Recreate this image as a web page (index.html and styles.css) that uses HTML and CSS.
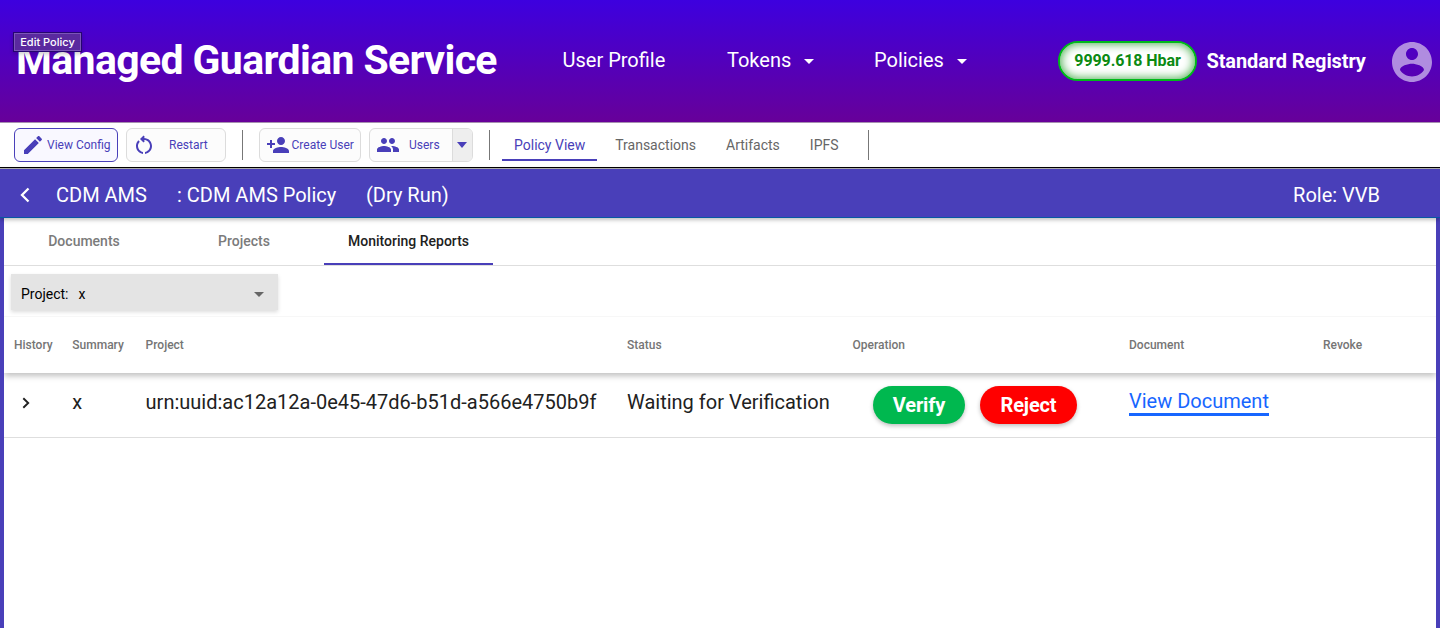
FILE: index.html
```html
<!DOCTYPE html>
<html lang="en">
<head>
<meta charset="utf-8">
<title>Managed Guardian Service</title>
<link rel="stylesheet" href="styles.css">
</head>
<body>
<header class="header">
  <div class="brand">Managed Guardian Service<span class="tooltip">Edit Policy</span></div>
  <nav class="menu">
    <a class="menu-profile">User Profile</a>
    <a class="menu-tokens">Tokens <i class="caret"></i></a>
    <a class="menu-policies">Policies <i class="caret"></i></a>
  </nav>
  <div class="balance">9999.618 Hbar</div>
  <div class="role-name">Standard Registry</div>
  <svg class="avatar" viewBox="2 2 20 20"><path d="M12 2C6.48 2 2 6.48 2 12s4.48 10 10 10 10-4.480 10-10S17.520 2 12 2zm0 3c1.660 0 3 1.340 3 3s-1.340 3-3 3-3-1.340-3-3 1.340-3 3-3zm0 14.200c-2.500 0-4.710-1.280-6-3.220.030-1.990 4-3.080 6-3.080 1.990 0 5.970 1.090 6 3.080-1.290 1.940-3.500 3.220-6 3.220z"/></svg>
</header>

<section class="toolbar">
  <button class="tool tool-config active"><svg viewBox="0 0 24 24"><path d="M3 17.250V21h3.750L17.810 9.940l-3.750-3.750L3 17.250zM20.710 7.040c.390-.390.390-1.020 0-1.410l-2.340-2.340c-.390-.390-1.020-.390-1.410 0l-1.830 1.830 3.750 3.750 1.830-1.830z"/></svg><span>View Config</span></button>
  <button class="tool tool-restart"><svg viewBox="0 0 24 24"><path d="M6 13c0-1.650.670-3.150 1.760-4.240L6.340 7.340C4.900 8.790 4 10.790 4 13c0 4.080 3.050 7.440 7 7.930v-2.020c-2.830-.480-5-2.940-5-5.910zm14 0c0-4.420-3.580-8-8-8-.060 0-.120.010-.180.010l1.090-1.090L11.500 2.500 8 6l3.500 3.500 1.410-1.410-1.080-1.080c.060 0 .120-.010.170-.010 3.310 0 6 2.690 6 6 0 2.970-2.170 5.430-5 5.910v2.020c3.950-.490 7-3.850 7-7.930z"/></svg><span>Restart</span></button>
  <i class="divider"></i>
  <button class="tool tool-create"><svg viewBox="0 0 24 24"><path d="M15 12c2.210 0 4-1.790 4-4s-1.790-4-4-4-4 1.790-4 4 1.790 4 4 4zm-9-2V7H4v3H1v2h3v3h2v-3h3v-2H6zm9 4c-2.670 0-8 1.340-8 4v2h16v-2c0-2.660-5.330-4-8-4z"/></svg><span>Create User</span></button>
  <div class="tool tool-users"><svg viewBox="0 0 24 24"><path d="M16 11c1.660 0 2.990-1.340 2.990-3S17.660 5 16 5c-1.660 0-3 1.340-3 3s1.340 3 3 3zm-8 0c1.660 0 2.990-1.340 2.990-3S9.660 5 8 5C6.340 5 5 6.340 5 8s1.340 3 3 3zm0 2c-2.330 0-7 1.170-7 3.500V19h14v-2.500c0-2.330-4.670-3.500-7-3.500zm8 0c-.290 0-.620.020-.970.050 1.160.840 1.970 1.970 1.970 3.450V19h6v-2.500c0-2.330-4.670-3.500-7-3.500z"/></svg><span>Users</span><b class="split"><i class="caret"></i></b></div>
  <i class="divider"></i>
  <nav class="views">
    <a class="active">Policy View</a><a>Transactions</a><a>Artifacts</a><a>IPFS</a>
  </nav>
  <i class="divider"></i>
</section>

<section class="policy-bar">
  <svg class="back" viewBox="0 0 10 16"><path d="M8.500 1.500 2 8l6.500 6.500"/></svg>
  <span class="policy-name">CDM AMS</span>
  <span class="policy-desc">: CDM AMS Policy</span>
  <span class="policy-mode">(Dry Run)</span>
  <span class="policy-role">Role: VVB</span>
</section>

<main class="content">
  <nav class="tabs">
    <a class="tab-documents">Documents</a><a class="tab-projects">Projects</a><a class="tab-reports active">Monitoring Reports</a>
  </nav>
  <div class="filters">
    <div class="filter"><span>Project:</span><span class="filter-value">x</span><i class="caret"></i></div>
  </div>
  <div class="row head">
    <span>History</span><span>Summary</span><span>Project</span><span>Status</span><span>Operation</span><span>Document</span><span>Revoke</span>
  </div>
  <div class="row data">
    <svg class="expand" viewBox="0 0 8 12"><path d="m1.300 1.200 4.900 4.800-4.900 4.800"/></svg>
    <span>x</span>
    <span class="uuid">urn:uuid:ac12a12a-0e45-47d6-b51d-a566e4750b9f</span>
    <span class="status">Waiting for Verification</span>
    <div class="actions"><button class="pill verify">Verify</button><button class="pill reject">Reject</button></div>
    <div><a class="doc-link">View Document</a></div>
    <span></span>
  </div>
</main>
</body>
</html>
```
FILE: styles.css
```css
* { box-sizing: border-box; }
body {
  margin: 0;
  height: 628px;
  overflow: hidden;
  display: flex;
  flex-direction: column;
  background: #fff;
  font-family: Roboto, "Liberation Sans", sans-serif;
  color: #212121;
  white-space: nowrap;
}
button { font-family: inherit; padding: 0; }
svg { flex: none; display: block; }
.caret {
  display: inline-block;
  flex: none;
  border: 5px solid transparent;
  border-top-color: currentColor;
  border-bottom: 0;
}

.header {
  height: 123px;
  flex: none;
  display: flex;
  align-items: center;
  color: #fff;
  background: linear-gradient(#3d00df, #670099);
  border-bottom: 1px solid #a58fb0;
}
.brand {
  position: relative;
  width: 546px;
  padding-left: 16px;
  margin-top: -2px;
  font-size: 41px;
  font-weight: 700;
  letter-spacing: -0.63px;
}
.tooltip {
  position: absolute;
  left: 13px;
  top: -4px;
  width: 69px;
  height: 20px;
  border: 1px solid #26066f;
  box-shadow: inset 0 0 0 1px #7b55b8, 0 2px 4px rgba(0, 0, 0, .2);
  background: #5a299f;
  font-family: Inter, Roboto, sans-serif;
  font-size: 11px;
  font-weight: 500;
  line-height: 18px;
  letter-spacing: 0;
  text-align: center;
}
.menu { display: flex; font-size: 20px; width: 512px; padding-left: 16.500px; margin-top: -2px; }
.menu a { display: flex; align-items: center; gap: 13px; }
.menu .caret { margin-top: 3px; }
.menu-profile { width: 164.500px; }
.menu-tokens { width: 147px; }
.balance {
  width: 139px;
  height: 40px;
  border: 2px solid #00b91a;
  border-radius: 20px;
  background: #fff;
  box-shadow: inset 0 0 10px 1px #4caf50;
  color: #0b8a12;
  font-size: 16px;
  font-weight: 700;
  letter-spacing: -.1px;
  line-height: 36px;
  text-align: center;
}
.role-name { width: 195px; padding-left: 9.500px; font-size: 20px; font-weight: 700; letter-spacing: -.12px; }
.avatar { width: 40px; height: 40px; fill: #b08ce0; margin-top: 2px; }

.toolbar {
  height: 45px;
  flex: none;
  display: flex;
  align-items: center;
  padding: 0 0 0 14px;
  border-bottom: 1px solid #000;
}
.tool {
  display: flex;
  align-items: center;
  height: 34px;
  border: 1px solid #dcdcdc;
  border-radius: 6px;
  background: #fcfcfc;
  color: #493fb9;
  font-size: 12px;
  overflow: hidden;
}
.tool svg { width: 24px; height: 24px; fill: currentColor; }
.tool.active { border-color: #493fb9; background: #f9f8ff; }
.tool-config { width: 104px; margin-right: 8px; padding-left: 6px; gap: 2px; }
.tool-restart { width: 100px; padding-left: 5px; gap: 13px; }
.tool-create { width: 102px; margin-right: 8px; padding-left: 5.500px; gap: 2px; }
.tool-users { width: 104px; padding-left: 6px; gap: 9px; }
.split {
  width: 20px;
  height: 32px;
  margin-left: auto;
  display: flex;
  align-items: center;
  justify-content: center;
  border-left: 1px solid #dcdcdc;
  background: #eee;
}
.split .caret { border-width: 6px 5.500px 0; margin-right: 1px; }
.divider { width: 1px; height: 30px; margin: 0 16px; background: #777; }
.views { display: flex; height: 32px; margin-left: -4px; font-size: 14px; color: #666; }
.views a { padding: 0 12px; margin-right: 6px; line-height: 32px; }
.views a.active { color: #493fb9; border-bottom: 2px solid #493fb9; }
.views a:last-child { margin-right: 1px; }

.policy-bar {
  position: relative;
  height: 50px;
  flex: none;
  display: flex;
  align-items: center;
  padding: 4px 60px 0 20px;
  border-top: 1px solid #aaa;
  border-bottom: 1px solid #0758a4;
  background: #493fb9;
  box-shadow: 0 2px 4px rgba(0, 0, 0, .25);
  color: #fff;
  font-size: 20px;
}
.back { width: 10px; height: 16px; fill: none; stroke: #fff; stroke-width: 2.300; margin-right: 26px; }
.policy-name { width: 121px; }
.policy-desc { width: 189px; }
.policy-role { margin-left: auto; }

.content { flex: 1; border: 0 solid #493fb9; border-width: 0 4px; }
.tabs {
  height: 48px;
  display: flex;
  border-bottom: 1px solid #dedede;
  color: #7b7b7b;
  font-size: 14px;
  font-weight: 500;
  line-height: 47px;
  text-align: center;
}
.tabs a { width: 160px; }
.tabs .tab-reports { width: 169px; }
.tabs .active { color: #212121; border-bottom: 2px solid #493fb9; }
.filters { height: 51px; padding: 8px 7px; border-bottom: 1px solid #f7f7f7; }
.filter {
  width: 267px;
  height: 36px;
  display: flex;
  align-items: center;
  padding: 4px 14px 0 10px;
  background: #e4e4e4;
  box-shadow: 0 2px 4px rgba(0, 0, 0, .14);
  color: #000;
  font-size: 14px;
}
.filter-value { margin-left: 10px; }
.filter .caret { margin-left: auto; color: #666; }
.row {
  display: grid;
  grid-template-columns: 58.300px 73.300px 481.400px 225.500px 276.500px 194px 1fr;
  padding-left: 10px;
  align-items: center;
}
.head {
  height: 56px;
  color: #757575;
  font-size: 12px;
  font-weight: 500;
  box-shadow: 0 3px 6px rgba(0, 0, 0, .25);
  clip-path: inset(0 0 -12px 0);
}
.data { height: 65px; font-size: 20px; padding-bottom: 6px; border-bottom: 1px solid #dedede; }
.expand { width: 8px; height: 12px; margin: 2px 0 0 8px; fill: none; stroke: #212121; stroke-width: 1.900; }
.actions { display: flex; gap: 15px; padding: 5px 0 0 20.500px; }
.pill {
  height: 38px;
  border: 0;
  border-radius: 19px;
  box-shadow: 0 2px 4px rgba(0, 0, 0, .25);
  color: #fff;
  font-size: 20px;
  font-weight: 700;
  letter-spacing: -.15px;
}
.verify { width: 92px; background: #00b84f; }
.reject { width: 97px; background: #f00; }
.doc-link {
  display: block;
  width: 140px;
  height: 29px;
  margin-top: -1px;
  color: #1766ff;
  line-height: 28px;
  border-bottom: 3px solid #1766ff;
}
```
